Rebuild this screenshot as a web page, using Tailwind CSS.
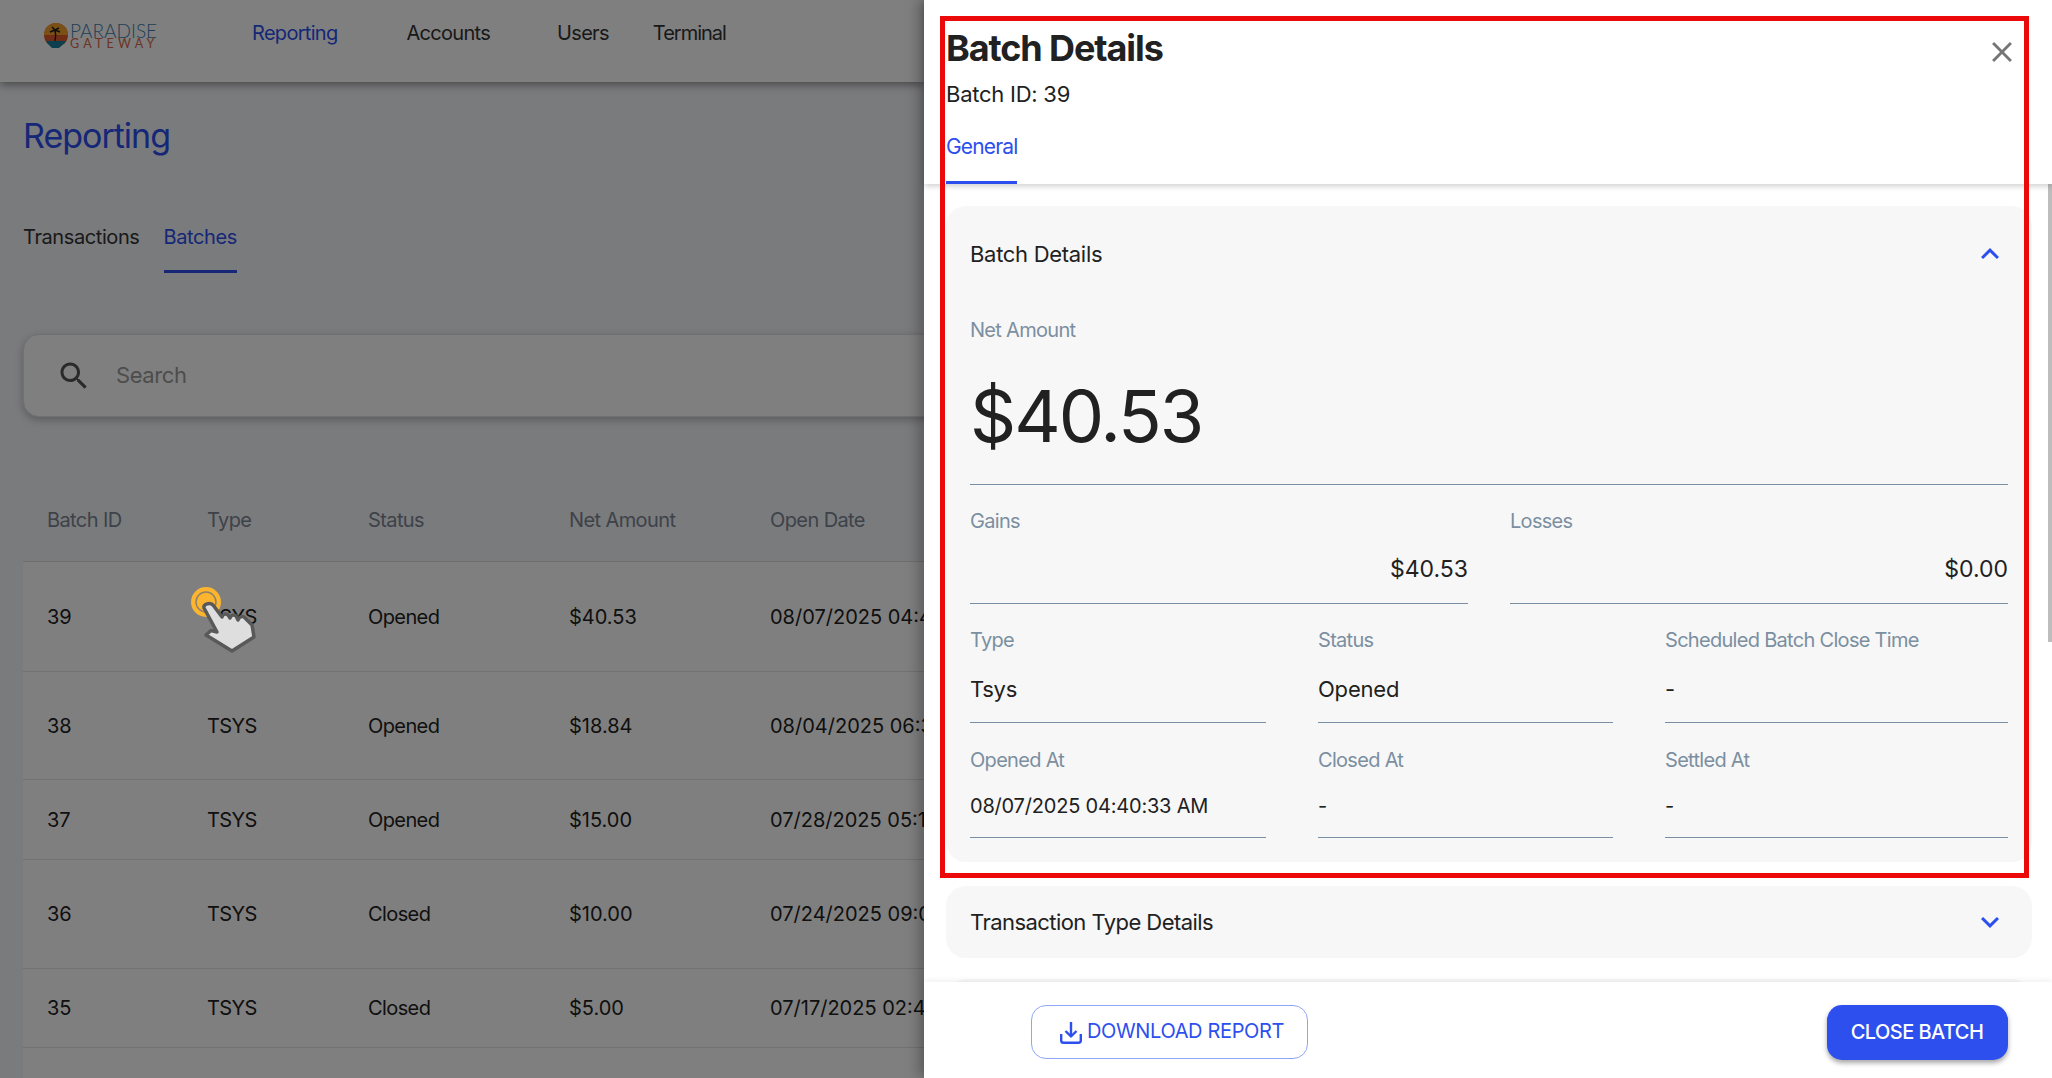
<!DOCTYPE html>
<html lang="en">
<head>
    <meta charset="UTF-8">
    <meta name="viewport" content="width=device-width, initial-scale=1.0">
    <title>Batch Details - Paradise Gateway</title>
    <script src="https://cdn.jsdelivr.net/npm/@tailwindcss/browser@4"></script>
</head>
<body class="font-[family-name:Inter,sans-serif] text-[#212121] bg-[#f5f6fa]">
<div class="relative w-[2052px] h-[1078px] overflow-hidden">

    <!-- page behind the drawer -->
    <div class="w-[924px] overflow-hidden">
        <header class="h-[82px] bg-white shadow-[0_3px_8px_rgba(0,0,0,0.4)] flex items-start pt-[20px] pl-[43px]">
            <svg class="w-[26px] h-[26px] mt-[3px] shrink-0" viewBox="0 0 26 26">
                <circle cx="13" cy="12" r="12" fill="#e2582a"/>
                <path d="M1 12a12 12 0 0 1 24 0z" fill="#f5a12c"/>
                <path d="M3 18h20a12 12 0 0 1-4 4l-3 3h-7l-3-3a12 12 0 0 1-3-4z" fill="#1d7f9c"/>
                <path d="M12 18c1-4 1-7 0-11M12 7 7 9M12 7l5 2M12 7 9 4M12 7l4-2" stroke="#1c1c1c" stroke-width="1.5" fill="none"/>
            </svg>
            <div class="ml-[1px] mt-[3px] w-[88px] font-[family-name:Lato,sans-serif]">
                <div class="text-[19px] leading-[16px] text-[#3f7cad] font-light">PARADISE</div>
                <div class="text-[12.5px] leading-[10px] tracking-[4.2px] text-[#d9684a] whitespace-nowrap">GATEWAY</div>
            </div>
            <nav class="flex -mt-[1px] text-[20px] leading-[28px] tracking-[-0.7px] text-[#333]">
                <a class="ml-[94px] text-[#2c4fee]">Reporting</a>
                <a class="ml-[69px]">Accounts</a>
                <a class="ml-[67px]">Users</a>
                <a class="ml-[44px] tracking-[-1px]">Terminal</a>
            </nav>
        </header>
        <div class="pl-[23px]">
            <h1 class="mt-[31px] text-[34px] leading-[46px] tracking-[-1px] text-[#2c4fee]">Reporting</h1>
            <div class="mt-[64px] flex gap-[24px] text-[20px] leading-[28px] tracking-[-0.4px]">
                <div class="text-[#333]">Transactions</div>
                <div class="text-[#2c4fee] border-b-[3px] border-[#2c4fee] h-[50px]">Batches</div>
            </div>
            <div class="mt-[61px] h-[83px] w-[1600px] rounded-[16px] bg-white border border-[#e2e2e2] shadow-[0_3px_8px_rgba(0,0,0,0.25)] flex items-center pl-[32px]">
                <svg class="w-[36px] h-[36px] text-[#555]" viewBox="0 0 24 24" fill="currentColor">
                    <path d="M15.5 14h-.79l-.28-.27C15.41 12.59 16 11.11 16 9.5 16 5.91 13.09 3 9.5 3S3 5.91 3 9.5 5.91 16 9.5 16c1.61 0 3.09-.59 4.23-1.57l.27.28v.79l5 4.99L20.49 19l-4.99-5zm-6 0C7.01 14 5 11.99 5 9.5S7.01 5 9.5 5 14 7.01 14 9.5 11.99 14 9.5 14z"/>
                </svg>
                <span class="ml-[24px] text-[22px] tracking-[-0.4px] text-[#9a9a9a]">Search</span>
            </div>

            <div class="mt-[61px] w-[901px] text-[20px] tracking-[-0.6px]">
                <div class="grid grid-cols-[160px_161px_201px_201px_1fr] h-[84px] pl-[24px] items-center border-b border-[#dcdcdc] text-[#7b8592]">
                    <div>Batch ID</div><div>Type</div><div>Status</div><div>Net Amount</div><div class="whitespace-nowrap overflow-hidden">Open Date</div>
                </div>
                <div class="grid grid-cols-[160px_161px_201px_201px_1fr] h-[110px] pl-[24px] items-center bg-white border-b border-[#e4e4e4]">
                    <div class="tracking-normal">39</div><div>TSYS</div><div>Opened</div><div class="tracking-normal">$40.53</div><div class="tracking-normal whitespace-nowrap overflow-hidden">08/07/2025 04:40:33 AM</div>
                </div>
                <div class="grid grid-cols-[160px_161px_201px_201px_1fr] h-[108px] pl-[24px] items-center bg-white border-b border-[#e4e4e4]">
                    <div class="tracking-normal">38</div><div>TSYS</div><div>Opened</div><div class="tracking-normal">$18.84</div><div class="tracking-normal whitespace-nowrap overflow-hidden">08/04/2025 06:31:12 AM</div>
                </div>
                <div class="grid grid-cols-[160px_161px_201px_201px_1fr] h-[80px] pl-[24px] items-center bg-white border-b border-[#e4e4e4]">
                    <div class="tracking-normal">37</div><div>TSYS</div><div>Opened</div><div class="tracking-normal">$15.00</div><div class="tracking-normal whitespace-nowrap overflow-hidden">07/28/2025 05:12:45 AM</div>
                </div>
                <div class="grid grid-cols-[160px_161px_201px_201px_1fr] h-[109px] pl-[24px] items-center bg-white border-b border-[#e4e4e4]">
                    <div class="tracking-normal">36</div><div>TSYS</div><div>Closed</div><div class="tracking-normal">$10.00</div><div class="tracking-normal whitespace-nowrap overflow-hidden">07/24/2025 09:03:20 AM</div>
                </div>
                <div class="grid grid-cols-[160px_161px_201px_201px_1fr] h-[79px] pl-[24px] items-center bg-white border-b border-[#e4e4e4]">
                    <div class="tracking-normal">35</div><div>TSYS</div><div>Closed</div><div class="tracking-normal">$5.00</div><div class="tracking-normal whitespace-nowrap overflow-hidden">07/17/2025 02:41:08 AM</div>
                </div>
                <div class="h-[60px] bg-white"></div>
            </div>
        </div>
    </div>

    <!-- backdrop -->
    <div class="absolute inset-0 bg-black/50"></div>

    <!-- drawer -->
    <aside class="absolute top-0 right-0 bottom-0 w-[1128px] bg-white flex flex-col shadow-[-6px_0_12px_rgba(0,0,0,0.25)]">
        <div class="relative z-10 h-[184px] shrink-0 bg-white pl-[22px] shadow-[0_2px_6px_rgba(0,0,0,0.2)]">
            <div class="flex justify-between pr-[32px]">
                <div>
                    <h2 class="pt-[26px] text-[36px] leading-[44px] font-bold tracking-[-1.1px]">Batch Details</h2>
                    <p class="mt-[8px] text-[22px] leading-[32px] tracking-[-0.25px]">Batch ID: 39</p>
                </div>
                <svg class="w-[34px] h-[34px] mt-[35px] mr-[1px] text-[#757575]" viewBox="0 0 24 24" fill="currentColor">
                    <path d="M19 6.41 17.59 5 12 10.59 6.41 5 5 6.41 10.59 12 5 17.59 6.41 19 12 13.41 17.59 19 19 17.59 13.41 12z"/>
                </svg>
            </div>
            <div class="mt-[23px] inline-block h-[51px] border-b-[3px] border-[#2c4fee] text-[21px] leading-[28px] tracking-[-0.85px] text-[#2c4fee]">General</div>
        </div>

        <div class="flex-1 overflow-hidden pl-[22px]">
            <div class="w-[1086px] mt-[22px] rounded-[20px] bg-[#f7f7f7]">
                <div class="h-[96px] flex items-center justify-between px-[24px]">
                    <span class="text-[22px] tracking-[-0.3px]">Batch Details</span>
                    <svg class="w-[36px] h-[36px] text-[#2c4fee]" viewBox="0 0 24 24" fill="currentColor"><path d="M12 8l-6 6 1.41 1.41L12 10.83l4.59 4.58L18 14z"/></svg>
                </div>
                <div class="px-[24px] pb-[24px]">
                    <div class="mt-[14px] border-b border-[#7a8fa3] pb-[28px]">
                        <div class="text-[20px] leading-[28px] tracking-[-0.7px] text-[#7b8fa1]">Net Amount</div>
                        <div class="mt-[32px] text-[72px] leading-[80px] tracking-[-2px]">$40.53</div>
                    </div>
                    <div class="grid grid-cols-2 gap-x-[42px]">
                        <div class="mt-[22px] border-b border-[#7a8fa3] pb-[18px]">
                            <div class="text-[20px] leading-[28px] tracking-[-0.7px] text-[#7b8fa1]">Gains</div>
                            <div class="mt-[18px] text-right text-[23px] leading-[32px]">$40.53</div>
                        </div>
                        <div class="mt-[22px] border-b border-[#7a8fa3] pb-[18px]">
                            <div class="text-[20px] leading-[28px] tracking-[-0.7px] text-[#7b8fa1]">Losses</div>
                            <div class="mt-[18px] text-right text-[23px] leading-[32px]">$0.00</div>
                        </div>
                    </div>
                    <div class="grid grid-cols-[296px_295px_343px] gap-x-[52px]">
                        <div class="mt-[22px] border-b border-[#7a8fa3] pb-[17px]">
                            <div class="text-[20px] leading-[28px] tracking-[-0.7px] text-[#7b8fa1]">Type</div>
                            <div class="mt-[19px] text-[22px] leading-[32px] tracking-[-0.3px]">Tsys</div>
                        </div>
                        <div class="mt-[22px] border-b border-[#7a8fa3] pb-[17px]">
                            <div class="text-[20px] leading-[28px] tracking-[-0.7px] text-[#7b8fa1]">Status</div>
                            <div class="mt-[19px] text-[22px] leading-[32px] tracking-[-0.2px]">Opened</div>
                        </div>
                        <div class="mt-[22px] border-b border-[#7a8fa3] pb-[17px]">
                            <div class="text-[20px] leading-[28px] tracking-[-0.7px] text-[#7b8fa1]">Scheduled Batch Close Time</div>
                            <div class="mt-[19px] text-[22px] leading-[32px]">-</div>
                        </div>
                        <div class="mt-[23px] border-b border-[#7a8fa3] pb-[17px]">
                            <div class="text-[20px] leading-[28px] tracking-[-0.7px] text-[#7b8fa1]">Opened At</div>
                            <div class="mt-[18px] text-[20px] leading-[28px] tracking-[-0.2px]">08/07/2025 04:40:33 AM</div>
                        </div>
                        <div class="mt-[23px] border-b border-[#7a8fa3] pb-[17px]">
                            <div class="text-[20px] leading-[28px] tracking-[-0.7px] text-[#7b8fa1]">Closed At</div>
                            <div class="mt-[18px] text-[20px] leading-[28px]">-</div>
                        </div>
                        <div class="mt-[23px] border-b border-[#7a8fa3] pb-[17px]">
                            <div class="text-[20px] leading-[28px] tracking-[-0.7px] text-[#7b8fa1]">Settled At</div>
                            <div class="mt-[18px] text-[20px] leading-[28px]">-</div>
                        </div>
                    </div>
                </div>
            </div>
            <div class="w-[1086px] mt-[24px] h-[72px] rounded-[20px] bg-[#f7f7f7] flex items-center justify-between px-[24px]">
                <span class="text-[22px] tracking-[-0.55px]">Transaction Type Details</span>
                <svg class="w-[36px] h-[36px] text-[#2c4fee]" viewBox="0 0 24 24" fill="currentColor"><path d="M16.59 8.59 12 13.17 7.41 8.59 6 10l6 6 6-6z"/></svg>
            </div>
            <div class="w-[1086px] mt-[21px] h-[72px] rounded-[20px] bg-[#f7f7f7]"></div>
        </div>

        <div class="relative z-10 h-[96px] shrink-0 bg-white pt-[23px] pl-[107px] pr-[44px] flex items-start justify-between shadow-[0_-2px_6px_rgba(0,0,0,0.06)]">
            <button class="w-[277px] h-[54px] rounded-[15px] border border-[#8fa6f5] flex items-center justify-center gap-[5px] pl-[5px] pb-[2px] text-[20px] tracking-[-0.35px] text-[#2c4fee]">
                <svg class="w-[22px] h-[23px] mt-[2px]" viewBox="0 0 22 23" fill="none" stroke="currentColor" stroke-width="2.4" stroke-linejoin="round">
                    <path d="M11 1v14M5.5 10l5.5 5.5 5.5-5.5"/>
                    <path d="M1.2 13v6.5a2.3 2.3 0 0 0 2.3 2.3h15a2.3 2.3 0 0 0 2.3-2.3V13"/>
                </svg>
                DOWNLOAD REPORT
            </button>
            <button class="w-[181px] h-[55px] rounded-[15px] bg-[#2c4fee] text-white text-[20px] font-medium tracking-[-0.55px] pb-[2px] pr-[1px] shadow-[0_3px_5px_rgba(0,0,0,0.35)]">CLOSE BATCH</button>
        </div>

        <!-- scrollbar thumb -->
        <div class="absolute top-[184px] right-0 w-[4px] h-[458px] bg-[#bdbdbd]"></div>
    </aside>

    <!-- highlight box from the tutorial capture -->
    <div class="absolute left-[940px] top-[16px] w-[1089px] h-[862px] border-[5px] border-[#ec0909] z-20"></div>

    <!-- click cursor -->
    <svg class="absolute left-[170px] top-[570px] w-[110px] h-[90px] z-20" viewBox="0 0 110 90">
        <circle cx="36" cy="32" r="15" fill="#fdb52f"/>
        <circle cx="36" cy="32" r="10" fill="none" stroke="#8f8266" stroke-width="1.5"/>
        <path d="M34 38 47 62 41 60.5 36 65 62 81 84 67 82 55 74 47C72 46 69 47 68 50L66 46C64 44 61 45 60 48L58 45C56 43 53 44 52 47L43 35C40 32 33 34 34 38Z" fill="#dedede" stroke="#595959" stroke-width="3.5" stroke-linejoin="round"/>
    </svg>
</div>
</body>
</html>
